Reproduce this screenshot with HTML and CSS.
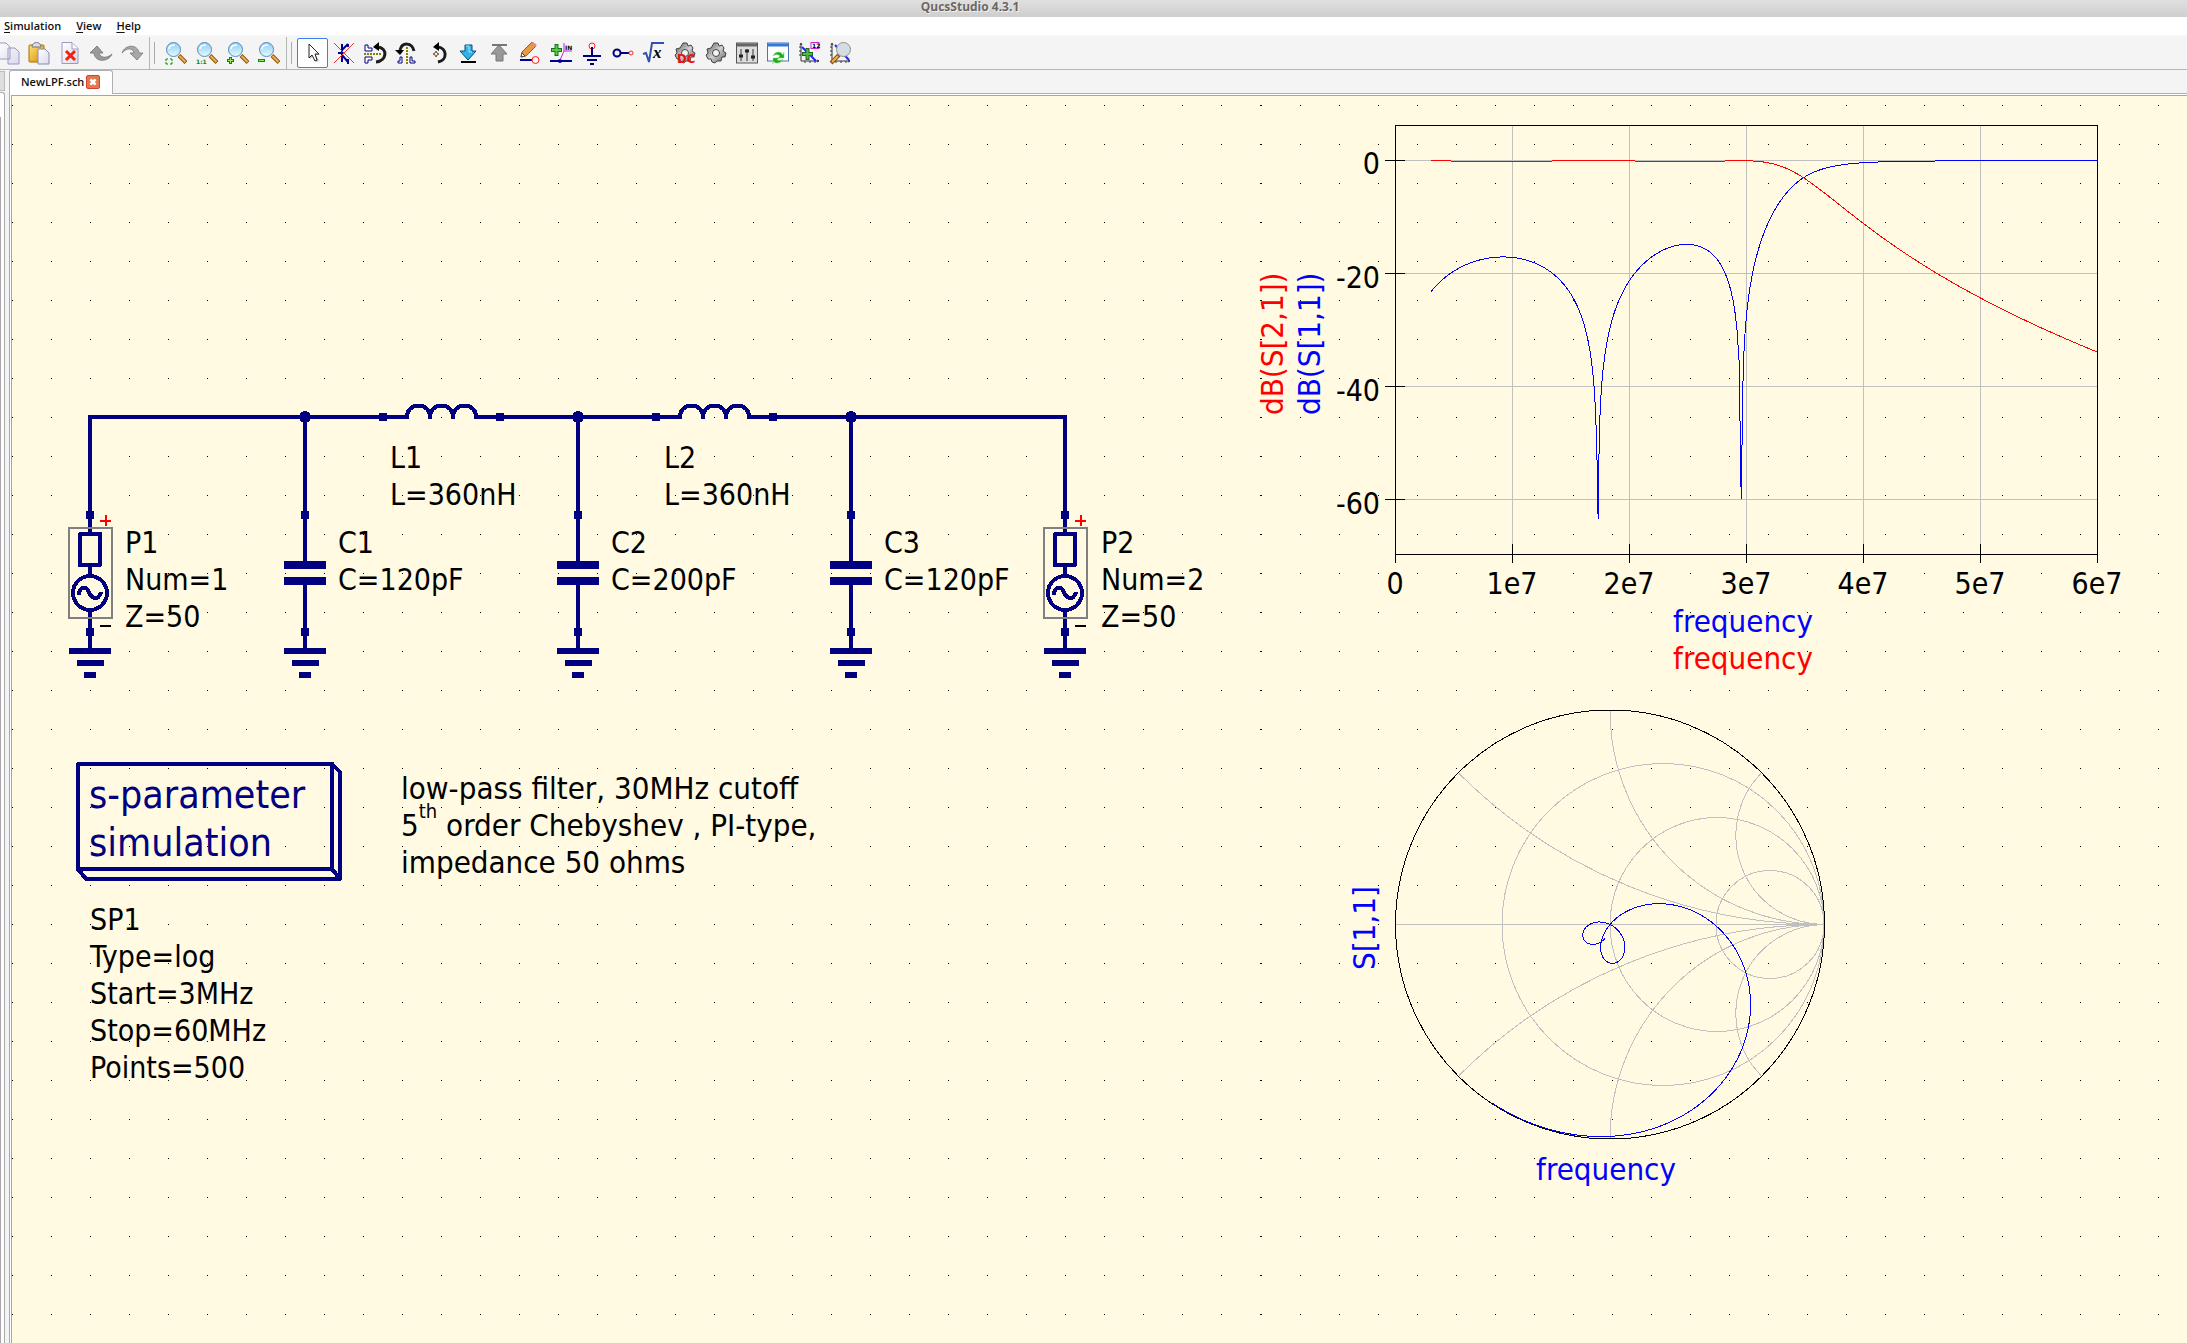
FILE: index.html
```html
<!DOCTYPE html>
<html lang="en">
<head>
<meta charset="utf-8">
<title>QucsStudio 4.3.1</title>
<link rel="stylesheet" href="styles.css">
</head>
<body>
<svg class="defs" aria-hidden="true">
  <defs>
    <linearGradient id="glass" x1="0" y1="0" x2="0" y2="1"><stop offset="0" stop-color="#8ecdf2"/><stop offset="1" stop-color="#e2fbff"/></linearGradient>
    <linearGradient id="steel" x1="0" y1="0" x2="1" y2="1"><stop offset="0" stop-color="#5a5a5a"/><stop offset=".5" stop-color="#d0d0d0"/><stop offset="1" stop-color="#555"/></linearGradient>
    <linearGradient id="sheet" x1="0" y1="0" x2="1" y2="1"><stop offset="0" stop-color="#fff"/><stop offset="1" stop-color="#d9d9ee"/></linearGradient>
    <linearGradient id="gold" x1="0" y1="0" x2="1" y2="1"><stop offset="0" stop-color="#ffe27a"/><stop offset="1" stop-color="#d98e00"/></linearGradient>
    <symbol id="lens" viewBox="0 0 22 22">
      <path d="M14 13.500l7 7" stroke="#8a5414" stroke-width="4"/><path d="M14.500 14l6 6" stroke="#f2b04a" stroke-width="2"/>
      <circle cx="8.500" cy="7.500" r="7" fill="url(#glass)" stroke="#5f87b8"/>
      <path d="M4 7c0-3 3-4 6-4" fill="none" stroke="#fff" stroke-width="1.500"/>
    </symbol>
    <symbol id="gear" viewBox="0 0 22 22">
      <path d="M9 1h4l1 3 3-1 2 3-1 3 3 2-1 4-3 0-1 4-4 0-2 2-3-1-1-3-3 0-2-4 2-2-1-4 4-1z" fill="url(#steel)" stroke="#444"/>
      <circle cx="11" cy="11" r="3.500" fill="#f4f4f4" stroke="#444"/>
    </symbol>
    <symbol id="axes" viewBox="0 0 22 22">
      <path d="M3 2v17h18" fill="none" stroke="#333"/><path d="M1 5h2M1 9h2M1 13h2M7 19v2M12 19v2M17 19v2M2 3l1-2 1 2M19 18l2 1-2 1" stroke="#333" fill="none"/>
    </symbol>
    <pattern id="grid" width="39" height="39" patternUnits="userSpaceOnUse"><rect y="9" width="1" height="1"/></pattern>
    <pattern id="grid-right" x="1" width="39" height="39" patternUnits="userSpaceOnUse"><rect y="9" width="1" height="1"/></pattern>
    <g id="ground"><rect x="-2" y="0" width="4" height="16"/><rect x="-4" y="-4" width="8" height="8"/><rect x="-21" y="16" width="42" height="6"/><rect x="-13" y="28" width="27" height="6"/><rect x="-6" y="40" width="12" height="6"/></g>
    <g id="capacitor"><rect x="-2" y="-98" width="4" height="144"/><rect x="-4" y="-4" width="8" height="8"/><rect x="-21" y="46" width="42" height="8"/><rect x="-21" y="62" width="42" height="8"/><rect x="-2" y="70" width="4" height="45"/><circle cy="-98" r="6"/><use href="#ground" y="117"/></g>
    <g id="inductor"><rect x="-4" y="-4" width="8" height="8"/><rect x="113" y="-4" width="8" height="8"/><path class="wire" d="M0 0H24V-1a11 10 0 0 1 23 0V2V-1a11 10 0 0 1 23 0V2V-1a11 10 0 0 1 23 0V0H117"/></g>
    <g id="port">
      <rect x="-4" y="-4" width="8" height="8"/>
      <path class="wire" d="M0 0V19M0 50V61M0 97V117"/>
      <rect class="frame" x="-21" y="13" width="43" height="90"/>
      <rect class="wire round" x="-10" y="19" width="20" height="31"/>
      <circle class="wire" cy="78" r="17"/>
      <path class="wire" d="M-11 80C-11 71 -3 71 -1 77S8 87 11 77"/>
      <path class="plus" d="M10 6H21M16 0V11"/><path class="minus" d="M10 111H21"/>
      <use href="#ground" y="117"/>
    </g>
  </defs>
</svg>

<header class="titlebar">QucsStudio 4.3.1</header>
<nav class="menubar"><button><u>S</u>imulation</button><button><u>V</u>iew</button><button><u>H</u>elp</button></nav>

<div class="toolbar" role="toolbar" aria-label="Main toolbar">
  <div class="tools first">
    <button aria-label="Copy"><svg viewBox="0 0 22 22"><path d="M0 1h9l4 4v12h-13z M11 6h7l4 4v12h-11z" fill="url(#sheet)" stroke="#9a9ac0"/></svg></button>
    <button aria-label="Paste"><svg viewBox="0 0 22 22"><rect x="1" y="3" width="15" height="17" rx="1" fill="url(#gold)" stroke="#a86c00"/><path d="M4 5c0-6 9-6 9 0z" fill="#ddd" stroke="#777"/><path d="M10 7h7l4 4v11h-11z" fill="url(#sheet)" stroke="#8a8ab5"/></svg></button>
    <button aria-label="Delete"><svg viewBox="0 0 22 22"><path d="M3 0.500h10l6 6v15h-16z" fill="url(#sheet)" stroke="#9a9ac0"/><path d="M13 1v6h6" fill="#fff" stroke="#9a9ac0"/><path d="M7 9l9 9M16 9l-9 9" stroke="#f2220c" stroke-width="3"/></svg></button>
    <button aria-label="Undo"><svg viewBox="0 0 22 22"><path d="M0 11L7 4l6 7H9c1 5 8 6 13 1-3 8-17 9-18-1z" fill="#9a9a9a" stroke="#808080"/></svg></button>
    <button aria-label="Redo"><svg viewBox="0 0 22 22"><path d="M1 11C4 2 17 2 18 11h4l-6 7-7-7h4C12 6 6 5 1 11z" fill="#a8a8a8" stroke="#868686"/></svg></button>
  </div>
  <div class="tools">
    <button aria-label="View all"><svg viewBox="0 0 22 22"><use href="#lens"/><path d="M1 19v-2h2M5 17h2v2M1 20v2h2M5 22h2v-2" class="mark thin"/></svg></button>
    <button aria-label="View 1:1"><svg viewBox="0 0 22 22"><use href="#lens"/><text x="0" y="22" class="ratio">1:1</text></svg></button>
    <button aria-label="Zoom in"><svg viewBox="0 0 22 22"><use href="#lens"/><path d="M0 18.500h7M3.500 15v7" class="mark"/><path d="M1 18.500h5M3.500 16v5" stroke="#8cf05a"/></svg></button>
    <button aria-label="Zoom out"><svg viewBox="0 0 22 22"><use href="#lens"/><path d="M0 18.500h7" class="mark"/><path d="M1 18.500h5" stroke="#8cf05a"/></svg></button>
  </div>
  <div class="tools">
    <button class="active" aria-label="Select"><svg viewBox="0 0 22 22"><path d="M8 3v14l3-3 3 6 3-1-3-6h4z" fill="#bbb"/><path d="M7 2v14l3-3 3 6 2-1-2-6h4z" fill="#fff" stroke="#222"/></svg></button>
    <button aria-label="Deactivate"><svg viewBox="0 0 22 22"><path d="M9 2v18M5 11h4M9 8l6-6M9 13l6 7M15 2v3M15 17v5" stroke="#000090" stroke-width="2"/><path d="M1 1l20 20M21 1L1 21" stroke="#f33" stroke-width="1"/></svg></button>
    <button aria-label="Mirror vertically"><svg viewBox="0 0 22 22"><path d="M1 3h3v3h4v3h-7zM1 15h7v3h-4v3h-3z" class="piece"/><path d="M0 12h18" class="dash"/><path d="M12 20C23 19 24 6 14 5" class="turn"/><path d="M9 5l6-5v9z"/></svg></button>
    <button aria-label="Mirror horizontally"><svg viewBox="0 0 22 22"><path d="M7 15v6h-4v-2h2v-4zM15 15v6h5v-2h-3v-4z" class="piece"/><path d="M12 5v17" class="dash"/><path d="M19 9C17 0 7 0 5 8" class="turn"/><path d="M0 8h9l-4 5z"/></svg></button>
    <button aria-label="Rotate"><svg viewBox="0 0 22 22"><path d="M12 20C22 18 21 6 12 5" class="turn"/><path d="M7 5l6-5v9z"/><path d="M10 9l1 2 2 1-2 1-1 2-1-2-2-1 2-1z" fill="#ffe9a0" stroke="#654"/></svg></button>
    <button aria-label="Enter subcircuit"><svg viewBox="0 0 22 22"><path d="M8 3h7v6h4l-8 9-8-9h5z" fill="#2eb4e8" stroke="#074a7c"/><path d="M9 4h3v6h3" fill="none" stroke="#9ce8ff"/><path d="M4 20h15" stroke="#000" stroke-width="2"/></svg></button>
    <button aria-label="Leave subcircuit"><svg viewBox="0 0 22 22"><path d="M8 19h7v-7h4l-8-9-8 9h5z" fill="#999" stroke="#777"/><path d="M4 3h15" stroke="#777" stroke-width="2"/></svg></button>
    <button aria-label="Wire"><svg viewBox="0 0 22 22"><path d="M2 15l1-5L13 0l4 4L7 14z" fill="#e69a43" stroke="#9a5a1c"/><path d="M2 15l1-4 3 3z" fill="#fff" stroke="#444"/><path d="M12 1l4 4 2-2-4-3z" fill="#f0837a"/><path d="M1 18h12" stroke="#000090" stroke-width="2"/><circle cx="16.500" cy="18" r="3.500" class="red"/></svg></button>
    <button aria-label="Label"><svg viewBox="0 0 22 22"><path d="M0 19h22" stroke="#000090" stroke-width="2"/><circle cx="10" cy="19" r="2" fill="#000090"/><path d="M1 8h11M6.500 2v12" stroke="#187018" stroke-width="4"/><path d="M2 8h9M6.500 3v10" stroke="#58c848" stroke-width="2"/><path d="M10 18l4-9h8M14 9V1" fill="none" stroke="#d020d0"/><text x="15" y="8" class="tiny">IN</text></svg></button>
    <button aria-label="Ground"><svg viewBox="0 0 22 22"><circle cx="11" cy="4" r="3" class="red"/><path d="M11 5v8M2 14h18M6 18h10M9 22h4" stroke="#000080" stroke-width="2"/></svg></button>
    <button aria-label="Port"><svg viewBox="0 0 22 22"><circle cx="5" cy="11" r="3.500" fill="none" stroke="#000080" stroke-width="2"/><path d="M9 11h8" stroke="#000080" stroke-width="2"/><circle cx="19" cy="11" r="2" class="red"/></svg></button>
    <button aria-label="Equation"><svg viewBox="0 0 22 22"><path d="M0 12l3-1 3 9L9 1h12" fill="none" stroke="#3350b0" stroke-width="2"/><text x="10" y="16" class="var">x</text></svg></button>
    <button aria-label="DC bias"><svg viewBox="0 0 22 22"><use href="#gear"/><text x="3" y="21" class="dc">DC</text></svg></button>
    <button aria-label="Simulate"><svg viewBox="0 0 22 22"><use href="#gear"/></svg></button>
    <button aria-label="Tune"><svg viewBox="0 0 22 22"><rect x="0.500" y="1" width="21" height="20" fill="#ddd" stroke="#555"/><path d="M1 3h20" stroke="#666" stroke-width="3"/><path d="M5 7v12M11 7v12M17 7v12" stroke="#333"/><path d="M3 14h4M9 9h4M15 15h4" stroke="#222" stroke-width="3"/></svg></button>
    <button aria-label="Show data display"><svg viewBox="0 0 22 22"><rect x="0.500" y="1" width="21" height="18" fill="#fff" stroke="#4775c0"/><path d="M1 3h20" stroke="#3478d8" stroke-width="3"/><path d="M6 14c2-5 8-5 10-1l1-3v6h-6l2-2c-2-2-4-2-7 0zM16 17c-2 5-8 5-10 2v3-6h6l-2 2c2 1 4 1 6-1z" fill="#20a820" stroke="#7ae060" stroke-width=".5"/></svg></button>
    <button aria-label="Set marker"><svg viewBox="0 0 22 22"><use href="#axes"/><path d="M4 5l14 14" stroke="#22f" stroke-width="2"/><path d="M4 12h11M9.500 6v12" stroke="#1b6a1b" stroke-width="4"/><path d="M5 12h9M9.500 7v10" stroke="#52b848" stroke-width="2"/><rect x="13" y="0.500" width="8" height="6" fill="#fff" stroke="#d020d0"/><text x="14" y="6" class="tiny">12</text></svg></button>
    <button aria-label="Zoom diagram"><svg viewBox="0 0 22 22"><use href="#axes"/><path d="M6 3l14 15" stroke="#22f" stroke-width="2"/><path d="M10 13l-8 8" stroke="#8a5414" stroke-width="4"/><path d="M9 14l-6 6" stroke="#f2b04a" stroke-width="2"/><circle cx="14.500" cy="7.500" r="7" fill="#d5dde2" stroke="#8b9399"/></svg></button>
  </div>
</div>

<main class="workspace">
  <aside class="dock"><div class="dock-tab"></div><div class="dock-panel"><div class="dock-list"></div></div></aside>
  <section class="documents">
    <div class="tabs"><div class="tab"><span>NewLPF.sch</span><button class="close" aria-label="Close tab"><svg viewBox="0 0 14 14"><path d="M4 4l6 6M10 4l-6 6" stroke="#fff" stroke-width="3"/></svg></button></div></div>
    <div class="page">
      <svg class="canvas" role="img" aria-label="Schematic of a low-pass filter with S-parameter diagrams">
        <rect class="paper" width="100%" height="100%"/>
        <rect width="1249" height="100%" fill="url(#grid)"/><rect x="1249" width="100%" height="100%" fill="url(#grid-right)"/>
        <g transform="translate(-12 -96)">
          <g class="schematic">
            <path class="wire" d="M90 515V417H383M500 417H656M773 417H1065V515"/>
            <use href="#port" x="90" y="515"/><use href="#port" x="1065" y="515"/>
            <use href="#capacitor" x="305" y="515"/><use href="#capacitor" x="578" y="515"/><use href="#capacitor" x="851" y="515"/>
            <use href="#inductor" x="383" y="417"/><use href="#inductor" x="656" y="417"/>
            <path class="wire round" d="M78 764H332V869H78ZM332 764L340 772V879H86L78 869M332 869L340 879"/>
          </g>
          <g class="label">
            <text y="553"><tspan x="125">P1</tspan><tspan x="125" dy="37">Num=1</tspan><tspan x="125" dy="37">Z=50</tspan></text>
            <text y="553"><tspan x="338">C1</tspan><tspan x="338" dy="37">C=120pF</tspan></text>
            <text y="553"><tspan x="611">C2</tspan><tspan x="611" dy="37">C=200pF</tspan></text>
            <text y="553"><tspan x="884">C3</tspan><tspan x="884" dy="37">C=120pF</tspan></text>
            <text y="553"><tspan x="1101">P2</tspan><tspan x="1101" dy="37">Num=2</tspan><tspan x="1101" dy="37">Z=50</tspan></text>
            <text y="468"><tspan x="390">L1</tspan><tspan x="390" dy="37">L=360nH</tspan></text>
            <text y="468"><tspan x="664">L2</tspan><tspan x="664" dy="37">L=360nH</tspan></text>
            <text y="930"><tspan x="90">SP1</tspan><tspan x="90" dy="37">Type=log</tspan><tspan x="90" dy="37">Start=3MHz</tspan><tspan x="90" dy="37">Stop=60MHz</tspan><tspan x="90" dy="37">Points=500</tspan></text>
            <text class="wide" y="799"><tspan x="401">low-pass filter, 30MHz cutoff</tspan><tspan x="401" dy="37">5</tspan><tspan class="super" dy="-18">th</tspan><tspan dy="18"> order Chebyshev , PI-type,</tspan><tspan x="401" dy="37">impedance 50 ohms</tspan></text>
            <text class="command" y="808"><tspan x="89">s-parameter</tspan><tspan x="89" dy="48">simulation</tspan></text>
          </g>

          <g class="diagram">
            <path class="gridline" d="M1512.500 125V554M1629.500 125V554M1746.500 125V554M1863.500 125V554M1980.500 125V554M1396 160.500H2097M1396 273.500H2097M1396 386.500H2097M1396 499.500H2097"/>
            <path class="axis" d="M1395.500 125.500H2097.500V554.500H1395.500ZM1385 160.500H1405M1385 273.500H1405M1385 386.500H1405M1385 499.500H1405M1395.500 544V563M1512.500 544V563M1629.500 544V563M1746.500 544V563M1863.500 544V563M1980.500 544V563M2097.500 544V563"/>
            <polyline id="s11-db" class="trace blue"/><polyline id="s21-db" class="trace red"/>
          </g>
          <g class="label end"><text x="1380" y="174">0</text><text x="1380" y="288">-20</text><text x="1380" y="401">-40</text><text x="1380" y="514">-60</text></g>
          <g class="label mid">
            <text x="1395" y="594">0</text><text x="1512" y="594">1e7</text><text x="1629" y="594">2e7</text><text x="1746" y="594">3e7</text><text x="1863" y="594">4e7</text><text x="1980" y="594">5e7</text><text x="2097" y="594">6e7</text>
          </g>
          <g class="label mid wide">
            <text class="blue" x="1743" y="632">frequency</text><text class="red" x="1743" y="669">frequency</text><text class="blue" x="1606" y="1180">frequency</text>
          </g>
          <g class="label wide">
            <text class="red" transform="translate(1283 415) rotate(-90)">dB(S[2,1])</text>
            <text class="blue" transform="translate(1320 415) rotate(-90)">dB(S[1,1])</text>
            <text class="blue" transform="translate(1375 970) rotate(-90)">S[1,1]</text>
          </g>
          <g class="diagram" transform="translate(1610 924.500)">
            <path class="gridline" d="M-214 0H214M0 -214A214 214 0 0 0 214 0A214 214 0 0 0 0 214M-151 -151A517 517 0 0 0 214 0A517 517 0 0 0 -151 151M151 -151A89 89 0 0 0 214 0A89 89 0 0 0 151 151"/>
            <circle class="gridline" cx="53" r="161"/><circle class="gridline" cx="107" r="107"/><circle class="gridline" cx="160" r="54"/>
            <circle class="axis" r="214.500"/>
            <polyline id="s11-smith" class="trace blue"/>
          </g>
        </g>
      </svg>
    </div>
  </section>
</main>
<script src="script.js"></script>
</body>
</html>
```
FILE: styles.css
```css
* { box-sizing: border-box; }
body { margin: 0; min-height: 100vh; display: flex; flex-direction: column; background: #f4f4f4; overflow: hidden; color: #111; font: 600 11px/16px "Open Sans", "Noto Sans", sans-serif; }
button { border: 0; padding: 0; background: none; color: inherit; font: inherit; }
.defs { position: absolute; width: 0; height: 0; }
.titlebar { height: 17px; padding-right: 247px; background: linear-gradient(#e0e0e0, #cecece); color: #6b6763; font: bold 12px/13px "Open Sans", sans-serif; text-align: center; text-shadow: 1px 1px #efefef; }
.menubar { display: flex; gap: 15px; height: 20px; padding: 1px 4px; background: #fff; border-bottom: 2px solid #f6f6f6; }
.menubar u { text-underline-offset: 2px; }

.toolbar { display: flex; height: 33px; border-bottom: 1px solid #b4b8b4; overflow: hidden; }
.tools { display: flex; align-items: center; padding: 0 2px 0 10px; border-left: 1px solid #b4b8b4; position: relative; }
.tools.first { margin-left: -8px; padding: 0 2px 0 0; border: 0; }
.tools:not(.first)::before { content: ""; position: absolute; left: 4px; top: 5px; width: 1px; height: 22px; background: #aaa; }
.tools button { display: grid; place-items: center; width: 31px; height: 30px; border-radius: 2px; }
.tools .active { background: #fff; border: 1px solid #3a80e8; }
.tools svg { width: 22px; height: 22px; overflow: visible; }
.mark { fill: none; stroke: #0a8a0a; stroke-width: 3; }
.mark.thin { stroke-width: 1; }
.ratio { font: bold 6px "DejaVu Sans", sans-serif; fill: #0a8a0a; }
.piece { fill: #fff; stroke: #000080; }
.dash { stroke: #8a8000; stroke-width: 2; stroke-dasharray: 2 1; }
.turn { fill: none; stroke: #1c1c1c; stroke-width: 3; }
.tools .red { fill: none; stroke: #f22; }
.tiny { font: bold 6px "DejaVu Sans", sans-serif; }
.var { font: italic bold 17px "Liberation Serif", serif; }
.dc { font: bold 13px "DejaVu Sans Condensed", sans-serif; fill: #f01010; }

.workspace { display: flex; flex: 1; }
.dock { display: flex; flex-direction: column; width: 9px; padding-right: 4px; }
.dock-tab { height: 20px; margin: 1px 0; border: 1px solid #bbb; border-left: 0; background: #dedede; }
.dock-panel { flex: 1; padding-top: 24px; border: 1px solid #aaa; border-width: 1px 1px 0 0; border-radius: 0 3px 0 0; background: #fff; display: flex; }
.dock-list { width: 1px; background: #a8a8ac; }
.documents { display: flex; flex: 1; flex-direction: column; }
.tabs { display: flex; height: 24px; border-bottom: 1px solid #aeb1b4; }
.tab { display: flex; align-items: center; gap: 2px; height: 24px; padding: 0 12px 1px 11px; border: 1px solid #aeb1b4; border-bottom: 0; border-radius: 3px 3px 0 0; background: #fff; }
.close { width: 14px; height: 14px; border: 1px solid #d8402c; border-radius: 2px; background: #e07850; }
.close svg { display: block; width: 12px; height: 12px; }
.page { display: flex; flex: 1; padding: 1px 0 0 1px; border-left: 1px solid #aaa; background: #fff; }
.canvas { flex: 1; display: block; border: 1px solid #a6a6a6; border-width: 1px 0 0 1px; }

.paper { fill: #fffae1; }
.schematic, .defs g { fill: #000080; shape-rendering: crispEdges; }
.wire { fill: none; stroke: #000080; stroke-width: 4; }
.round { stroke-linejoin: round; }
.frame { fill: none; stroke: #808080; stroke-width: 2; }
.plus { stroke: #f00; stroke-width: 2; }
.minus { stroke: #000; stroke-width: 2; }
.label { font: 30px "DejaVu Sans Condensed", "DejaVu Sans", sans-serif; fill: #000; white-space: pre; }
.label.wide, .label .wide { font-size: 31px; }
.label .super { font-size: 20px; }
.label .command { font-size: 39px; fill: #000080; }
.label .blue { fill: #00f; }
.label .red { fill: #f00; }
.end { text-anchor: end; }
.mid { text-anchor: middle; }
.diagram { fill: none; stroke-width: 1; shape-rendering: crispEdges; }
.gridline { stroke: #c0c0c0; }
.axis { stroke: #000; }
.trace.blue { stroke: #00f; }
.trace.red { stroke: #f00; }
```
FILE: script.js
```js
// S-parameters of the PI-type ladder: shunt C1, series L1, shunt C2, series L2, shunt C3.
const mul = (a, b) => [a[0] * b[0] - a[1] * b[1], a[0] * b[1] + a[1] * b[0]];
const add = (...v) => v.reduce((s, c) => [s[0] + c[0], s[1] + c[1]], [0, 0]);
const scale = (a, k) => [a[0] * k, a[1] * k];
const div = (a, b) => scale(mul(a, [b[0], -b[1]]), 1 / (b[0] ** 2 + b[1] ** 2));
const chain = (m, n) => [
  add(mul(m[0], n[0]), mul(m[1], n[2])), add(mul(m[0], n[1]), mul(m[1], n[3])),
  add(mul(m[2], n[0]), mul(m[3], n[2])), add(mul(m[2], n[1]), mul(m[3], n[3])),
];
const shunt = (w, c) => [[1, 0], [0, 0], [0, w * c], [1, 0]];
const series = (w, l) => [[1, 0], [0, w * l], [0, 0], [1, 0]];
const dB = (s) => 20 * Math.log10(Math.hypot(...s));

const Z = 50, POINTS = 500, START = 3e6, STOP = 60e6;
const reflection = [], transmission = [], smith = [];
for (let i = 0; i < POINTS; i++) {
  const f = START * (STOP / START) ** (i / (POINTS - 1));
  const w = 2 * Math.PI * f;
  const [A, B, C, D] = [shunt(w, 120e-12), series(w, 360e-9), shunt(w, 200e-12), series(w, 360e-9), shunt(w, 120e-12)].reduce(chain);
  const den = add(A, scale(B, 1 / Z), scale(C, Z), D);
  const s11 = div(add(A, scale(B, 1 / Z), scale(C, -Z), scale(D, -1)), den);
  const s21 = div([2, 0], den);
  const x = 1395.5 + f * 117 / 1e7;
  reflection.push(`${x},${160.75 - dB(s11) * 5.65}`);
  transmission.push(`${x},${160.75 - dB(s21) * 5.65}`);
  smith.push(`${s11[0] * 214},${-s11[1] * 214}`);
}
document.getElementById("s11-db").setAttribute("points", reflection.join(" "));
document.getElementById("s21-db").setAttribute("points", transmission.join(" "));
document.getElementById("s11-smith").setAttribute("points", smith.join(" "));
```
